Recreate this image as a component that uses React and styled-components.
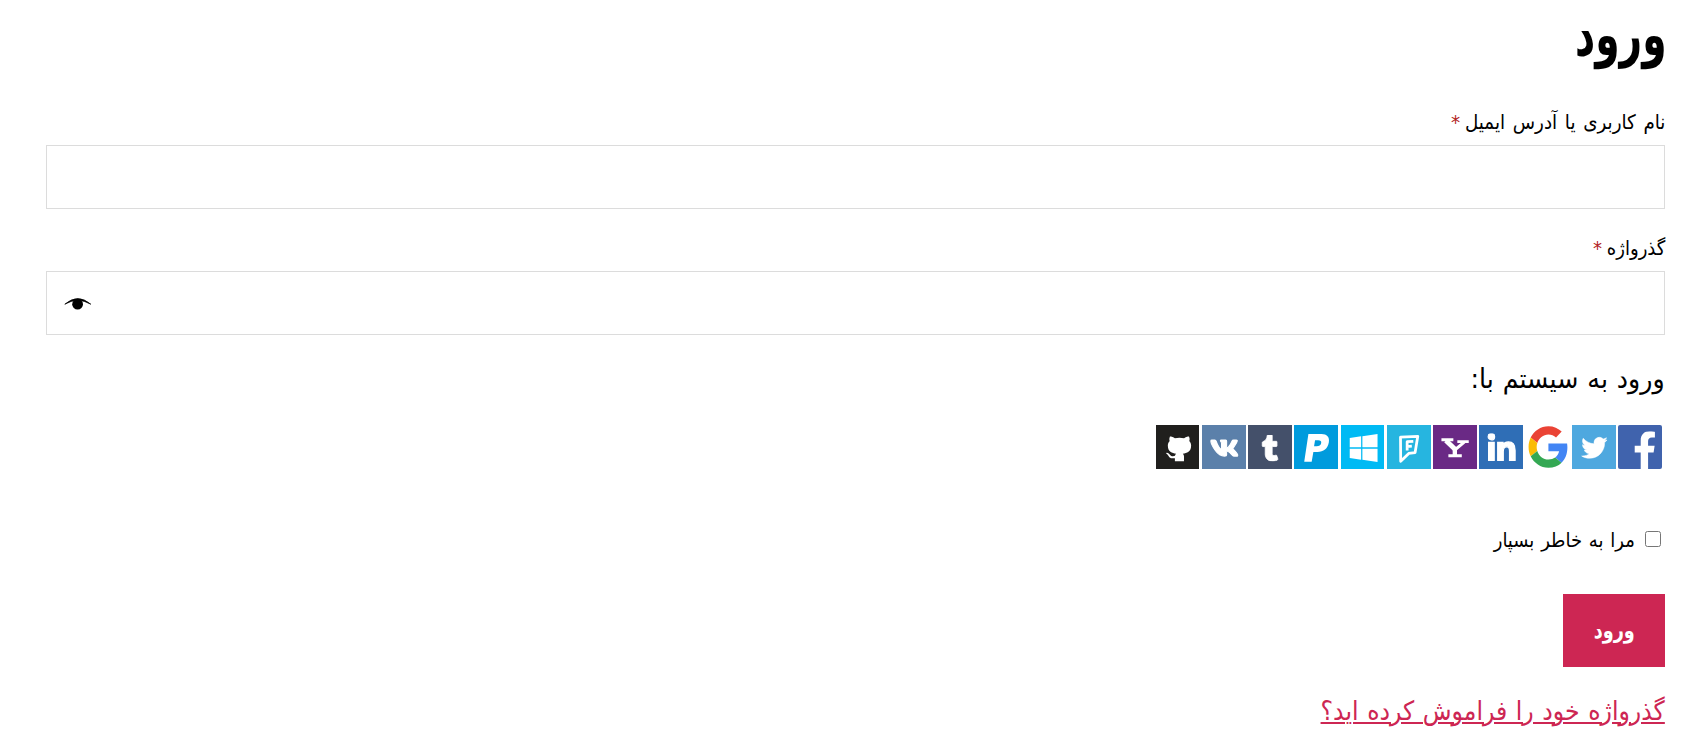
import React from 'react';
import styled, { createGlobalStyle } from 'styled-components';
import { FaFacebookF, FaLinkedinIn, FaTumblr, FaTwitter, FaVk, FaWindows } from 'react-icons/fa';

const COLOR_ACCENT = '#cd2653';
const COLOR_BORDER = '#dcdcdc';
const COLOR_REQUIRED = '#b22222';
const FONT = "'DejaVu Sans', 'Noto Sans', sans-serif";

const GlobalStyle = createGlobalStyle`
    * {
        box-sizing: border-box;
    }

    body {
        margin: 0;
        background-color: #fff;
        color: #000;
        font-family: ${FONT};
    }
`;

const Page = styled.main`
    display: flex;
    flex-direction: column;
    align-items: flex-start;
    height: 745px;
    padding: 0 41px 0 46px;
    overflow: hidden;
`;

const Narrow = styled.span`
    display: inline-block;
    transform: scaleX(${props => props.$scale || 0.9});
    transform-origin: ${props => props.$origin || 'right'} center;
    white-space: nowrap;
`;

const Title = styled.h2`
    height: 80px;
    margin: 0 -2px 0 0;
    font-size: 59px;
    font-weight: 700;
    line-height: 70px;
`;

const Field = styled.div`
    width: 100%;
    margin-top: ${props => props.$gap}px;
`;

const Label = styled.label`
    display: block;
    height: 40px;
    font-size: 20px;
    line-height: 35px;
    word-spacing: 2px;
`;

const Required = styled.span`
    margin-right: -3px;
    color: ${COLOR_REQUIRED};
`;

const InputBox = styled.div`
    display: flex;
    align-items: center;
    width: 100%;
    height: 64px;
    border: solid 1px ${COLOR_BORDER};
`;

const Input = styled.input`
    flex: 1;
    min-width: 0;
    height: 100%;
    padding: 0 18px;
    border: 0;
    outline: 0;
    background: transparent;
    font: inherit;
`;

const EyeButton = styled.button`
    display: flex;
    margin: 2px 0 0 17px;
    padding: 0;
    border: 0;
    background: transparent;
`;

const SocialTitle = styled.p`
    height: 40px;
    margin: 23px 0 0;
    font-size: 27px;
    line-height: 42px;
    word-spacing: 1px;
`;

const SocialList = styled.div`
    display: flex;
    gap: 2.55px;
    margin: 27px 3.2px 0 0;
`;

const Tile = styled.svg`
    display: block;
    width: 43.7px;
    height: 44px;
    border-radius: ${props => props.$radius || 0}px;
    background-color: ${props => props.$color};
    color: #fff;
`;

const Remember = styled.label`
    display: flex;
    align-items: center;
    gap: 10px;
    height: 32px;
    margin: 54px 4px 0 0;
    font-size: 20px;
    word-spacing: 1.2px;
`;

const Checkbox = styled.input`
    width: 16px;
    height: 16px;
    margin: 0;
`;

const RememberText = styled.span`
    padding-top: 2px;
`;

const Submit = styled.button`
    display: flex;
    align-items: center;
    justify-content: center;
    width: 102px;
    height: 73px;
    margin-top: 39px;
    padding: 0 0 2px 1px;
    border: 0;
    background-color: ${COLOR_ACCENT};
    color: #fff;
    font-family: ${FONT};
    font-size: 22.5px;
    font-weight: 700;
`;

const LostPassword = styled.a`
    margin-top: 23px;
    color: ${COLOR_ACCENT};
    font-size: 26.5px;
    line-height: 41px;
    text-decoration: none;
    word-spacing: 1.2px;

    ${Narrow} {
        text-decoration: underline;
        text-decoration-thickness: 2px;
        text-underline-offset: 2px;
    }
`;

const EyeIcon = () => (
    <svg width="28" height="14" viewBox="0 0 28 14">
        <path d="M.8 7.2Q13.8-4 26.8 7.2Q13.8-.4 .8 7.2z" stroke="#000" strokeWidth=".7" />
        <circle cx="13.6" cy="7.2" r="5.4" />
    </svg>
);

const GoogleIcon = () => (
    <g transform="translate(2.6 1) scale(.832 .873)">
        <path fill="#ea4335" d="M24 9.5c3.54 0 6.71 1.22 9.21 3.6l6.85-6.85C35.9 2.38 30.47 0 24 0 14.62 0 6.51 5.38 2.56 13.22l7.98 6.19C12.43 13.72 17.74 9.5 24 9.5z" />
        <path fill="#4285f4" d="M46.98 24.55c0-1.57-.15-3.09-.38-4.55H24v9.02h12.94c-.58 2.96-2.26 5.48-4.78 7.18l7.73 6c4.51-4.18 7.09-10.36 7.09-17.65z" />
        <path fill="#fbbc05" d="M10.53 28.59c-.48-1.45-.76-2.99-.76-4.59s.27-3.14.76-4.59l-7.98-6.19C.92 16.46 0 20.12 0 24c0 3.88.92 7.54 2.56 10.78l7.97-6.19z" />
        <path fill="#34a853" d="M24 48c6.48 0 11.93-2.13 15.89-5.81l-7.73-6c-2.15 1.45-4.92 2.3-8.16 2.3-6.26 0-11.57-4.22-13.47-9.91l-7.98 6.19C6.51 42.62 14.62 48 24 48z" />
    </g>
);

const socials = [
    {
        name: 'Facebook',
        color: '#4063ad',
        radius: 2,
        icon: <FaFacebookF x="8" y="6.2" size={38} />
    },
    {
        name: 'Twitter',
        color: '#4ea8df',
        icon: <FaTwitter x="9.5" y="9.8" size={26} strokeWidth="10" />
    },
    {
        name: 'Google',
        color: '#fff',
        icon: <GoogleIcon />
    },
    {
        name: 'LinkedIn',
        color: '#2f6eb6',
        icon: <FaLinkedinIn x="7.3" y="8.3" size={31} strokeWidth="20" />
    },
    {
        name: 'Yahoo',
        color: '#6a2985',
        icon: (
            <g fill="none" stroke="#fff">
                <path d="M8.5 14.7h12M24.5 16.5h11.5M15.5 30.8h13.5" strokeWidth="2.8" />
                <path d="M13 15.5l9.5 9" strokeWidth="5" />
                <path d="M31.5 17l-9 7.5" strokeWidth="3" />
                <path d="M22 23.5v8" strokeWidth="4.4" />
            </g>
        )
    },
    {
        name: 'Foursquare',
        color: '#26b5e0',
        icon: (
            <g fill="none" stroke="#fff" strokeWidth="2.8" strokeLinejoin="round">
                <path d="M13.6 12l17.4-.8-2.7 16.4-6.4.9-8.1 7.9z" />
                <path d="M26.5 16.3l-6.2.4v8.8M20 21.6l5-.4" />
            </g>
        )
    },
    {
        name: 'Windows Live',
        color: '#00baf4',
        icon: <FaWindows x="6.8" y="7" size={32} />
    },
    {
        name: 'PayPal',
        color: '#009bdd',
        icon: (
            <path
                fillRule="evenodd"
                d="M14.5 9h13.2c5.4 0 8.3 3 7.4 8.2-1.1 6.5-5.4 9.8-11.5 9.8h-4.1l-1.7 9.8h-7.5zM21.2 15.2l-1 6h2.5c2.7 0 4.3-1 4.7-3.2.3-2-.7-2.8-3-2.8z"
            />
        )
    },
    {
        name: 'Tumblr',
        color: '#44506a',
        icon: <FaTumblr x="9" y="9.8" size={26.5} strokeWidth="16" />
    },
    {
        name: 'VK',
        color: '#5b80aa',
        icon: <FaVk x="8" y="8.6" size={29} strokeWidth="22" />
    },
    {
        name: 'GitHub',
        color: '#201f1d',
        icon: (
            <path
                transform="translate(5.2 4.7) scale(2.3 2.08)"
                d="M6.02 15.21c0-.19-.01-.82-.01-1.49-2.01.37-2.53-.49-2.69-.94-.09-.23-.48-.94-.82-1.13-.28-.15-.68-.52-.01-.53.63-.01 1.08.58 1.23.82.72 1.21 1.87.87 2.33.66.07-.52.28-.87.51-1.07-1.78-.2-3.64-.89-3.64-3.95 0-.87.31-1.59.82-2.15-.08-.2-.36-1.02.08-2.12 0 0 .67-.21 2.2.82.64-.18 1.32-.27 2-.27.68 0 1.36.09 2 .27 1.53-1.04 2.2-.82 2.2-.82.44 1.1.16 1.92.08 2.12.51.56.82 1.27.82 2.15 0 3.07-1.87 3.75-3.65 3.95.29.25.54.73.54 1.48 0 1.07-.01 1.93-.01 2.2z"
            />
        )
    }
];

const App = () => (
    <Page dir="rtl" lang="fa">
        <GlobalStyle />
        <Title><Narrow $scale={0.665}>ورود</Narrow></Title>
        <Field $gap={25}>
            <Label htmlFor="username">
                <Narrow $scale={0.915}>نام کاربری یا آدرس ایمیل <Required>*</Required></Narrow>
            </Label>
            <InputBox>
                <Input id="username" type="text" />
            </InputBox>
        </Field>
        <Field $gap={22}>
            <Label htmlFor="password">
                <Narrow>گذرواژه <Required>*</Required></Narrow>
            </Label>
            <InputBox>
                <Input id="password" type="password" />
                <EyeButton type="button">
                    <EyeIcon />
                </EyeButton>
            </InputBox>
        </Field>
        <SocialTitle><Narrow $scale={0.935}>ورود به سیستم با:</Narrow></SocialTitle>
        <SocialList>
            { socials.map(({ name, color, radius, icon }) => (
                <Tile key={name} viewBox="0 0 44 44" fill="currentColor" $color={color} $radius={radius}>
                    { icon }
                </Tile>
            )) }
        </SocialList>
        <Remember>
            <Checkbox type="checkbox" />
            <RememberText><Narrow>مرا به خاطر بسپار</Narrow></RememberText>
        </Remember>
        <Submit type="button"><Narrow $scale={0.785} $origin="center">ورود</Narrow></Submit>
        <LostPassword href="#"><Narrow $scale={0.89}>گذرواژه خود را فراموش کرده اید؟</Narrow></LostPassword>
    </Page>
);

export default App;
